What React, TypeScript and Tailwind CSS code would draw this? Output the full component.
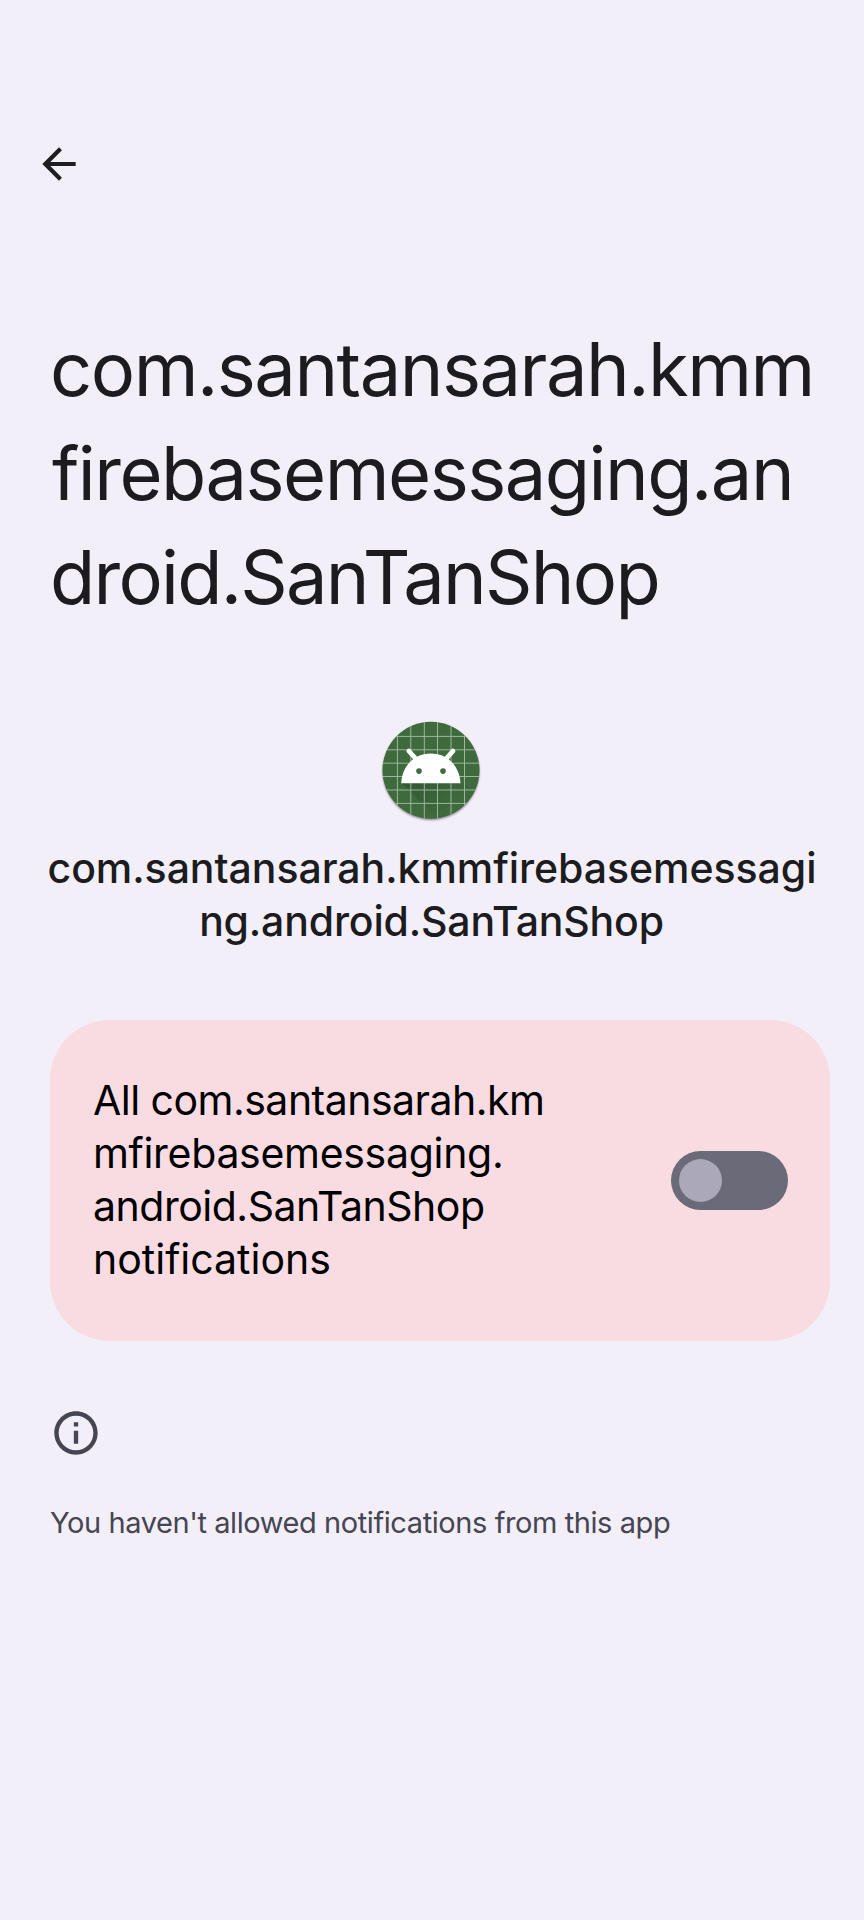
const gridX = [27.4, 40.8, 54.3, 67.5, 81, 94.5];
const gridY = [26.4, 39.8, 53.2, 66.5, 80, 93.4];

function BackIcon() {
  return (
    <svg viewBox="0 0 24 24" className="size-[50px]" fill="#1e1e21">
      <path d="M20 11H7.83l5.59-5.59L12 4l-8 8 8 8 1.41-1.41L7.83 13H20v-2z" />
    </svg>
  );
}

function InfoIcon() {
  return (
    <svg viewBox="0 0 24 24" className="size-[52px]" fill="#464552">
      <path d="M11 7h2v2h-2zm0 4h2v6h-2zm1-9C6.48 2 2 6.48 2 12s4.48 10 10 10 10-4.48 10-10S17.52 2 12 2zm0 18c-4.41 0-8-3.59-8-8s3.59-8 8-8 8 3.59 8 8-3.59 8-8 8z" />
    </svg>
  );
}

function AppIcon() {
  return (
    <svg viewBox="0 0 120 120" className="size-[120px]">
      <defs>
        <clipPath id="disc">
          <circle cx="61" cy="60.2" r="48.5" />
        </clipPath>
        <linearGradient id="shade" x1="40" y1="60" x2="72" y2="104" gradientUnits="userSpaceOnUse">
          <stop offset="0" stopColor="#000" stopOpacity="0.2" />
          <stop offset="1" stopColor="#000" stopOpacity="0" />
        </linearGradient>
        <filter id="soft" x="-10%" y="-10%" width="120%" height="125%">
          <feGaussianBlur stdDeviation="1" />
        </filter>
      </defs>
      <circle cx="61" cy="61.6" r="48.3" fill="#000" opacity="0.45" filter="url(#soft)" />
      <circle cx="61" cy="60.2" r="48.5" fill="#3e6a3d" />
      <g clipPath="url(#disc)">
        <path d="M31.5 73 L68 109.5 H110 V93 L90 73 Z" fill="url(#shade)" />
        <g stroke="#a5bfa5" strokeWidth="0.9">
          {gridX.map((x) => (
            <line key={x} x1={x} x2={x} y1="0" y2="120" />
          ))}
          {gridY.map((y) => (
            <line key={y} x1="0" x2="120" y1={y} y2={y} />
          ))}
        </g>
      </g>
      <g stroke="#fff" strokeWidth="4.8" strokeLinecap="round">
        <line x1="38.8" y1="41" x2="47" y2="50" />
        <line x1="83" y1="41" x2="75" y2="50" />
      </g>
      <path d="M31.2 73.2 C32.2 56 44 43.5 60.8 43.5 C77.6 43.5 89.5 56 90.5 73.2 Z" fill="#fff" />
      <circle cx="49" cy="61.1" r="2.8" fill="#3e6a3d" />
      <circle cx="73" cy="61.1" r="2.8" fill="#3e6a3d" />
    </svg>
  );
}

export default function App() {
  return (
    <div className="flex h-[1920px] w-[864px] flex-col overflow-hidden bg-[#f2eff9] font-['Inter','Noto_Sans',sans-serif] text-[#1b1b20]">
      <header className="pt-[139px] pl-[34px]">
        <BackIcon />
      </header>

      <h1 className="mt-[128px] pl-[50px] text-[74px] leading-[104px] font-normal whitespace-nowrap">
        <span className="block tracking-[-1.5px]">com.santansarah.kmm</span>
        <span className="block pl-[2px] tracking-[-1.52px]">firebasemessaging.an</span>
        <span className="block tracking-[-1.76px]">droid.SanTanShop</span>
      </h1>

      <section className="mt-[81px] flex flex-col items-center">
        <div className="mr-[4px]">
          <AppIcon />
        </div>
        <h2 className="mt-[12px] text-center text-[41px] leading-[53px] font-medium whitespace-nowrap">
          <span className="block tracking-[-0.05px]">com.santansarah.kmmfirebasemessagi</span>
          <span className="block pr-[1px] tracking-[-0.17px]">ng.android.SanTanShop</span>
        </h2>
      </section>

      <section className="mt-[72px] ml-[50px] flex h-[321px] w-[780px] items-center justify-between rounded-[60px] bg-[#f9dbe2] pr-[42px] pb-[2px] pl-[43px]">
        <p className="text-[41px] leading-[53px] whitespace-nowrap text-black">
          <span className="block tracking-[-0.52px]">All com.santansarah.km</span>
          <span className="block tracking-[-0.3px]">mfirebasemessaging.</span>
          <span className="block tracking-[-0.48px]">android.SanTanShop</span>
          <span className="block tracking-[0px]">notifications</span>
        </p>
        <button
          type="button"
          role="switch"
          aria-checked="false"
          aria-label="Notifications"
          className="mt-[2px] flex h-[59px] w-[117px] items-center rounded-full bg-[#6b6a78] pl-[8px]"
        >
          <span className="size-[43px] rounded-full bg-[#aba8b9]" />
        </button>
      </section>

      <footer className="mt-[66px] pl-[50px] text-[#464552]">
        <InfoIcon />
        <p className="mt-[46px] text-[29px] leading-[36px] tracking-[-0.42px] whitespace-nowrap">
          You haven't allowed notifications from this app
        </p>
      </footer>
    </div>
  );
}
